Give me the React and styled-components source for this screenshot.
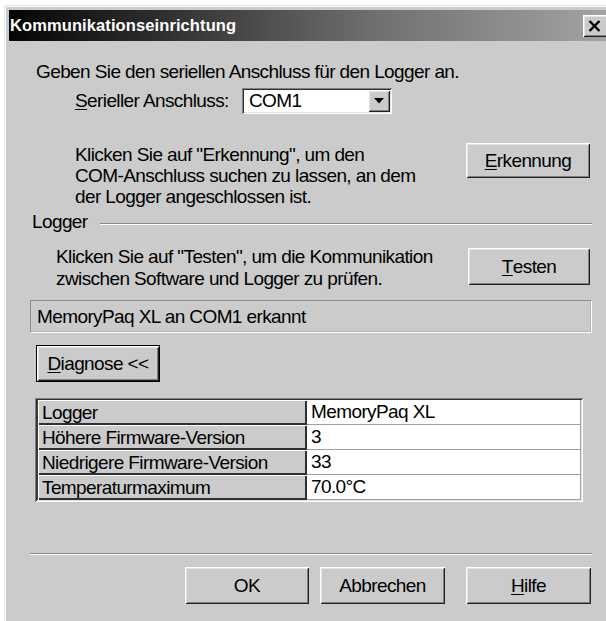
import React from 'react';
import styled, { createGlobalStyle, css } from 'styled-components';

const Global = createGlobalStyle`
  html, body { margin: 0; padding: 0; background: #ffffff; overflow: hidden; }
  body { font-family: "Liberation Sans", Arial, sans-serif; color: #000; }
  * { box-sizing: border-box; }
`;

const face = '#cbcbcb';

const uiText = css`
  font-family: "Liberation Sans", Arial, sans-serif;
  font-size: 19px;
  letter-spacing: -0.6px;
`;

const raised = css`
  background: ${face};
  border: none;
  box-shadow:
    inset 1px 1px 0 #ffffff,
    inset -1px -1px 0 #202020,
    inset 2px 2px 0 #e4e4e4,
    inset -2px -2px 0 #808080;
`;

const sunken = css`
  box-shadow:
    inset 1px 1px 0 #808080,
    inset -1px -1px 0 #ffffff,
    inset 2px 2px 0 #303030,
    inset -2px -2px 0 #e4e4e4;
`;

const Screen = styled.div`
  width: 606px;
  height: 621px;
  overflow: hidden;
  padding: 5px 0 0 4px;
`;

const Window = styled.div`
  width: 610px;
  height: 618px;
  background: ${face};
  border: 1px solid;
  border-color: #e4e4e4 #404040 #404040 #e4e4e4;
  box-shadow: inset 1px 1px 0 #ffffff, inset -1px -1px 0 #808080;
  padding: 4px 3px 3px 4px;
  display: flex;
  flex-direction: column;
`;

const TitleBar = styled.div`
  height: 31px;
  display: flex;
  align-items: center;
  justify-content: space-between;
  padding: 0 2px 0 1px;
  background: linear-gradient(to right, #050505 0%, #2e2e2e 25%, #6e6e6e 60%, #a4a4a4 100%);
`;

const Title = styled.span`
  color: #ffffff;
  font-weight: bold;
  font-size: 16.5px;
  letter-spacing: 0.1px;
`;

const CloseButton = styled.div`
  ${raised};
  width: 25px;
  height: 22px;
  display: flex;
  align-items: center;
  justify-content: center;
  padding-right: 3px;
`;

const Body = styled.div`
  ${uiText};
  flex: 1;
  display: flex;
  flex-direction: column;
  padding: 0 18px 0 21px;
`;

const Intro = styled.div`
  margin-top: 21px;
  padding-left: 6px;
  line-height: 20px;
`;

const PortRow = styled.div`
  margin-top: 6px;
  padding-left: 45px;
  display: flex;
  align-items: center;
`;

const FieldLabel = styled.span`
  width: 167px;
  line-height: 20px;
`;

const Combo = styled.div`
  ${sunken};
  background: #ffffff;
  width: 150px;
  height: 26px;
  padding: 2px;
  display: flex;
  align-items: center;
`;

const ComboValue = styled.span`
  flex: 1;
  padding-left: 5px;
  line-height: 20px;
`;

const ComboArrow = styled.div`
  ${raised};
  width: 22px;
  height: 22px;
  display: flex;
  align-items: center;
  justify-content: center;
`;

const ActionRow = styled.div`
  margin-top: ${p => p.$top}px;
  display: flex;
  justify-content: space-between;
  align-items: flex-start;
`;

const Note = styled.div`
  padding-left: ${p => p.$indent}px;
  line-height: ${p => p.$lh}px;
  margin-top: ${p => p.$offset || 0}px;
`;

const Button = styled.button`
  ${raised};
  ${uiText};
  width: ${p => p.$w}px;
  height: ${p => p.$h || 37}px;
  margin-top: ${p => p.$top || 0}px;
  margin-right: ${p => p.$right || 0}px;
  color: #000;
  padding: 0;
  display: flex;
  align-items: center;
  justify-content: center;
  ${p => p.$default && css`
    border: 1px solid #000;
  `}
`;

const Key = styled.span`
  text-decoration: underline;
  text-underline-offset: 2px;
`;

const GroupHeader = styled.div`
  margin-top: 5px;
  display: flex;
  align-items: center;
  padding-left: 2px;
  line-height: 20px;
`;

const GroupRule = styled.div`
  flex: 1;
  margin-left: 12px;
  margin-top: 3px;
  border-top: 1px solid #8a8a8a;
  border-bottom: 1px solid #ffffff;
`;

const Status = styled.div`
  margin-top: 10px;
  height: 33px;
  display: flex;
  align-items: center;
  padding-left: 6px;
  border: 1px solid;
  border-color: #8c8c8c #ffffff #ffffff #8c8c8c;
  box-shadow: inset -1px -1px 0 #b4b4b4;
`;

const DiagnoseWrap = styled.div`
  margin-top: 12px;
  padding-left: 6px;
`;

const Grid = styled.div`
  ${sunken};
  margin-top: 16px;
  margin-left: 5px;
  width: 548px;
  padding: 2px;
  background: #ffffff;
  display: grid;
  grid-template-columns: 270px 1fr;
  grid-auto-rows: 25px;
`;

const HeadCell = styled.div`
  background: ${face};
  border-left: 1px solid #404040;
  box-shadow:
    inset 1px 1px 0 #ffffff,
    inset -2px -2px 0 #303030;
  padding-left: 4px;
  display: flex;
  align-items: center;
  line-height: 20px;
`;

const ValueCell = styled.div`
  border-right: 1px solid #a0a0a0;
  border-bottom: 1px solid #a0a0a0;
  padding-left: 4px;
  display: flex;
  align-items: center;
  line-height: 20px;
`;

const Separator = styled.div`
  margin-top: 51px;
  border-top: 1px solid #8a8a8a;
  border-bottom: 1px solid #ffffff;
`;

const ButtonBar = styled.div`
  margin-top: 12px;
  display: flex;
  justify-content: flex-end;
  padding-right: 1px;
`;

const Gap = styled.div`
  width: ${p => p.$w}px;
`;

const rows = [
  ['Logger', 'MemoryPaq XL'],
  ['Höhere Firmware-Version', '3'],
  ['Niedrigere Firmware-Version', '33'],
  ['Temperaturmaximum', '70.0°C'],
];

export default function App() {
  return (
    <>
      <Global />
      <Screen>
        <Window>
          <TitleBar>
            <Title>Kommunikationseinrichtung</Title>
            <CloseButton>
              <svg width="13" height="12" viewBox="0 0 13 12">
                <path d="M1.5 1 L11.5 11 M11.5 1 L1.5 11" stroke="#000" strokeWidth="2.4" fill="none" />
              </svg>
            </CloseButton>
          </TitleBar>
          <Body>
            <Intro>Geben Sie den seriellen Anschluss für den Logger an.</Intro>
            <PortRow>
              <FieldLabel><Key>S</Key>erieller Anschluss:</FieldLabel>
              <Combo>
                <ComboValue>COM1</ComboValue>
                <ComboArrow>
                  <svg width="10" height="6" viewBox="0 0 10 6">
                    <path d="M0 0 H10 L5 5.5 Z" fill="#000" />
                  </svg>
                </ComboArrow>
              </Combo>
            </PortRow>
            <ActionRow $top={29}>
              <Note $indent={45} $lh={21} $offset={1}>
                Klicken Sie auf "Erkennung", um den<br />
                COM-Anschluss suchen zu lassen, an dem<br />
                der Logger angeschlossen ist.
              </Note>
              <Button $w={124} $h={35} $right={2}><Key>E</Key>rkennung</Button>
            </ActionRow>
            <GroupHeader>
              Logger
              <GroupRule />
            </GroupHeader>
            <ActionRow $top={14}>
              <Note $indent={26} $lh={22}>
                Klicken Sie auf "Testen", um die Kommunikation<br />
                zwischen Software und Logger zu prüfen.
              </Note>
              <Button $w={122} $top={2} $right={2}><Key>T</Key>esten</Button>
            </ActionRow>
            <Status>MemoryPaq XL an COM1 erkannt</Status>
            <DiagnoseWrap>
              <Button $w={124} $default><Key>D</Key>iagnose &lt;&lt;</Button>
            </DiagnoseWrap>
            <Grid>
              {rows.map(([k, v]) => (
                <React.Fragment key={k}>
                  <HeadCell>{k}</HeadCell>
                  <ValueCell>{v}</ValueCell>
                </React.Fragment>
              ))}
            </Grid>
            <Separator />
            <ButtonBar>
              <Button $w={124}>OK</Button>
              <Gap $w={11} />
              <Button $w={125}>Abbrechen</Button>
              <Gap $w={21} />
              <Button $w={125}><Key>H</Key>ilfe</Button>
            </ButtonBar>
          </Body>
        </Window>
      </Screen>
    </>
  );
}
